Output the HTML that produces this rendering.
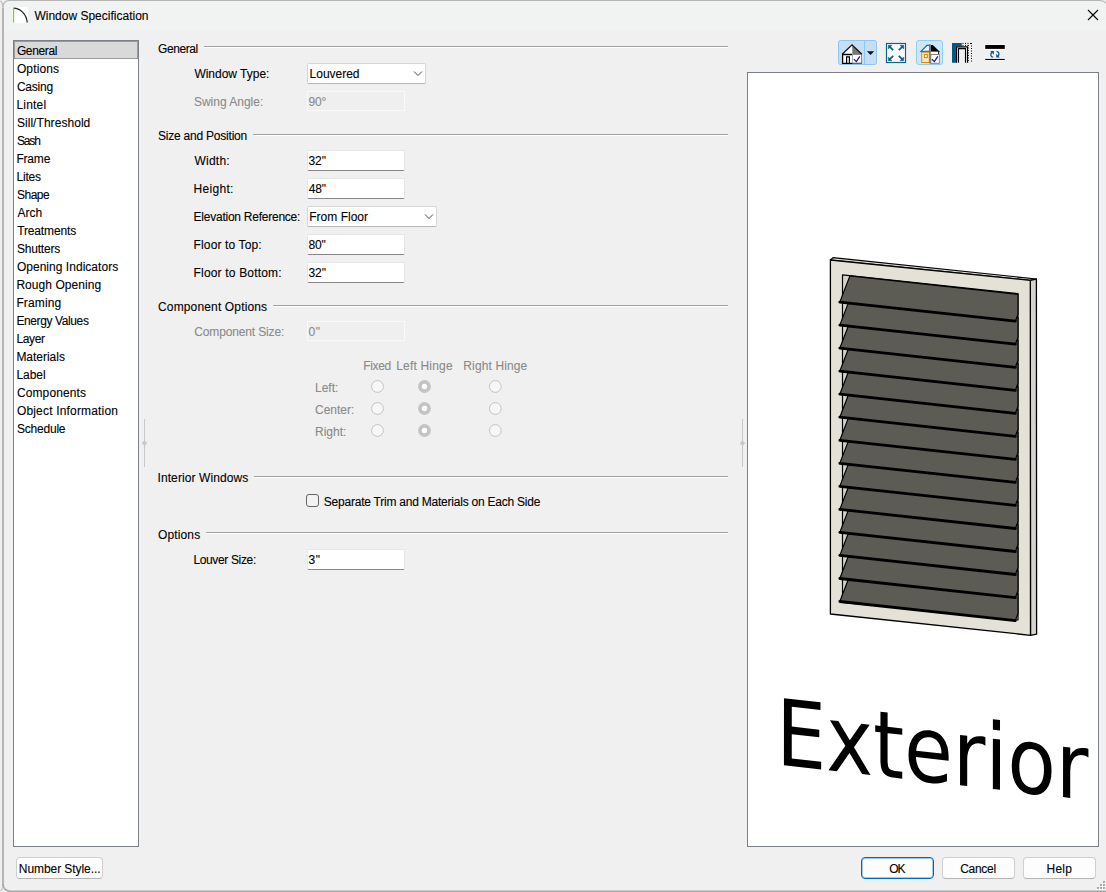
<!DOCTYPE html>
<html><head><meta charset="utf-8"><style>
html,body{margin:0;padding:0;}
body{width:1106px;height:892px;position:relative;overflow:hidden;background:#f0f0f0;font-family:'Liberation Sans',sans-serif;font-size:12px;}
.t{position:absolute;white-space:nowrap;line-height:14px;font-size:12px;-webkit-text-stroke:0.1px currentColor;}
</style></head><body>
<div style="position:absolute;left:4px;top:1px;width:1102px;height:890px;background:#f0f0f0;border-radius:7px 7px 0 7px;overflow:hidden"><div style="position:absolute;left:0;top:0;right:0;height:30px;background:#f1f3f3"></div></div><svg style="position:absolute;left:0;top:0" width="1106" height="892"><path d="M0.3 0.8 Q2.8 2.5 3 7" fill="none" stroke="#c4c4c4" stroke-width="1.2"/><path d="M0.3 891 Q2.8 889.5 3 885" fill="none" stroke="#c4c4c4" stroke-width="1.2"/><path d="M3 886 L3 7 Q3.2 1.2 9 0.5 L1099 0.5 Q1104.5 0.8 1106 3.5" fill="none" stroke="#b6b6b6" stroke-width="1.2"/><path d="M3 886 L3 8" fill="none" stroke="#b0b0b0" stroke-width="1.6"/><path d="M3 884 Q3.3 890.6 10 891.2 L1106 891.2" fill="none" stroke="#a8a8a8" stroke-width="1.6"/></svg><div style="position:absolute;left:1103px;top:881px;width:2px;height:2px;background:#a8a8a8;box-shadow:1px 1px 0 #fff;"></div><div style="position:absolute;left:1100px;top:884px;width:2px;height:2px;background:#a8a8a8;box-shadow:1px 1px 0 #fff;"></div><div style="position:absolute;left:1103px;top:884px;width:2px;height:2px;background:#a8a8a8;box-shadow:1px 1px 0 #fff;"></div><div style="position:absolute;left:1097px;top:887px;width:2px;height:2px;background:#a8a8a8;box-shadow:1px 1px 0 #fff;"></div><div style="position:absolute;left:1100px;top:887px;width:2px;height:2px;background:#a8a8a8;box-shadow:1px 1px 0 #fff;"></div><div style="position:absolute;left:1103px;top:887px;width:2px;height:2px;background:#a8a8a8;box-shadow:1px 1px 0 #fff;"></div><svg style="position:absolute;left:12px;top:7px" width="17" height="17" viewBox="0 0 17 17">
<rect x="1" y="0" width="15" height="16" fill="#fff"/>
<path d="M1.5 1.2 C8 1.2 14.5 7 15.2 15.5" stroke="#222" stroke-width="1.3" fill="none"/>
<rect x="1" y="1.5" width="1.2" height="14" fill="#8cc63f"/>
</svg><div class="t" style="left:34.40px;top:9px;color:#000;letter-spacing:0.003px;">Window Specification</div><svg style="position:absolute;left:1086px;top:8px" width="14" height="14" viewBox="0 0 14 14">
<path d="M2 2 L12 12 M12 2 L2 12" stroke="#000" stroke-width="1.1"/></svg><div style="position:absolute;left:13px;top:40px;width:126px;height:807px;background:#fff;border:1px solid #7a7f88;box-sizing:border-box;"></div><div style="position:absolute;left:14px;top:41px;width:124px;height:18px;background:#d9d9d9;border:1px solid #9a9a9a;box-sizing:border-box;"></div><div class="t" style="left:16.90px;top:44px;color:#000;letter-spacing:-0.367px;">General</div><div class="t" style="left:16.90px;top:62px;color:#000;letter-spacing:0.133px;">Options</div><div class="t" style="left:16.90px;top:80px;color:#000;letter-spacing:-0.210px;">Casing</div><div class="t" style="left:16.40px;top:98px;color:#000;letter-spacing:0.200px;">Lintel</div><div class="t" style="left:16.90px;top:116px;color:#000;letter-spacing:0.054px;">Sill/Threshold</div><div class="t" style="left:16.90px;top:134px;color:#000;letter-spacing:-1.117px;">Sash</div><div class="t" style="left:16.40px;top:152px;color:#000;letter-spacing:-0.188px;">Frame</div><div class="t" style="left:16.40px;top:170px;color:#000;letter-spacing:-0.175px;">Lites</div><div class="t" style="left:16.90px;top:188px;color:#000;letter-spacing:-0.463px;">Shape</div><div class="t" style="left:17.40px;top:206px;color:#000;letter-spacing:0.000px;">Arch</div><div class="t" style="left:17.15px;top:224px;color:#000;letter-spacing:-0.133px;">Treatments</div><div class="t" style="left:16.90px;top:242px;color:#000;letter-spacing:-0.193px;">Shutters</div><div class="t" style="left:16.90px;top:260px;color:#000;letter-spacing:0.032px;">Opening Indicators</div><div class="t" style="left:16.40px;top:278px;color:#000;letter-spacing:0.062px;">Rough Opening</div><div class="t" style="left:16.40px;top:296px;color:#000;letter-spacing:0.142px;">Framing</div><div class="t" style="left:16.40px;top:314px;color:#000;letter-spacing:-0.388px;">Energy Values</div><div class="t" style="left:16.40px;top:332px;color:#000;letter-spacing:-0.338px;">Layer</div><div class="t" style="left:16.40px;top:350px;color:#000;letter-spacing:-0.019px;">Materials</div><div class="t" style="left:16.40px;top:368px;color:#000;letter-spacing:-0.025px;">Label</div><div class="t" style="left:16.90px;top:386px;color:#000;letter-spacing:0.128px;">Components</div><div class="t" style="left:16.90px;top:404px;color:#000;letter-spacing:0.179px;">Object Information</div><div class="t" style="left:16.90px;top:422px;color:#000;letter-spacing:-0.200px;">Schedule</div><div style="position:absolute;left:144px;top:419px;width:1px;height:48px;background:#c8c8c8;"></div><svg style="position:absolute;left:140px;top:439px" width="9" height="9"><path d="M4.5 1.3 L7.2 4.2 L4.5 7.1 L1.8 4.2 Z" fill="#c8c8c8"/></svg><div style="position:absolute;left:742px;top:419px;width:1px;height:48px;background:#c8c8c8;"></div><svg style="position:absolute;left:738px;top:439px" width="9" height="9"><path d="M4.5 1.3 L7.2 4.2 L4.5 7.1 L1.8 4.2 Z" fill="#c8c8c8"/></svg><div class="t" style="left:158.00px;top:42px;color:#000;letter-spacing:-0.417px;">General</div><div style="position:absolute;left:204px;top:46px;width:524px;height:1px;background:#a0a0a0;"></div><div style="position:absolute;left:204px;top:47px;width:524px;height:1px;background:#fff;"></div><div class="t" style="left:158.00px;top:129px;color:#000;letter-spacing:-0.219px;">Size and Position</div><div style="position:absolute;left:253px;top:134px;width:475px;height:1px;background:#a0a0a0;"></div><div style="position:absolute;left:253px;top:135px;width:475px;height:1px;background:#fff;"></div><div class="t" style="left:158.00px;top:300px;color:#000;letter-spacing:0.147px;">Component Options</div><div style="position:absolute;left:273px;top:305px;width:455px;height:1px;background:#a0a0a0;"></div><div style="position:absolute;left:273px;top:306px;width:455px;height:1px;background:#fff;"></div><div class="t" style="left:157.50px;top:471px;color:#000;letter-spacing:0.093px;">Interior Windows</div><div style="position:absolute;left:254px;top:476px;width:474px;height:1px;background:#a0a0a0;"></div><div style="position:absolute;left:254px;top:477px;width:474px;height:1px;background:#fff;"></div><div class="t" style="left:158.00px;top:528px;color:#000;letter-spacing:0.133px;">Options</div><div style="position:absolute;left:206px;top:532px;width:522px;height:1px;background:#a0a0a0;"></div><div style="position:absolute;left:206px;top:533px;width:522px;height:1px;background:#fff;"></div><div class="t" style="left:194.40px;top:67px;color:#000;letter-spacing:-0.009px;">Window Type:</div><div class="t" style="left:193.90px;top:95px;color:#8a8a8a;letter-spacing:-0.005px;">Swing Angle:</div><div class="t" style="left:194.60px;top:154px;color:#000;letter-spacing:0.200px;">Width:</div><div class="t" style="left:193.60px;top:182px;color:#000;letter-spacing:0.300px;">Height:</div><div class="t" style="left:193.60px;top:210px;color:#000;letter-spacing:-0.245px;">Elevation Reference:</div><div class="t" style="left:193.60px;top:238px;color:#000;letter-spacing:0.125px;">Floor to Top:</div><div class="t" style="left:193.60px;top:266px;color:#000;letter-spacing:0.170px;">Floor to Bottom:</div><div class="t" style="left:194.30px;top:325px;color:#8a8a8a;letter-spacing:-0.150px;">Component Size:</div><div class="t" style="left:193.40px;top:553px;color:#000;letter-spacing:-0.350px;">Louver Size:</div><div style="position:absolute;left:307px;top:63px;width:119px;height:21px;background:#fff;border:1px solid #d6d6d6;border-bottom-color:#b8b8b8;border-radius:2px;box-sizing:border-box;"></div><div class="t" style="left:309.60px;top:67px;color:#000;letter-spacing:-0.021px;">Louvered</div><svg style="position:absolute;left:413px;top:70px" width="10" height="7" viewBox="0 0 10 7"><path d="M1 1.5 L5 5.5 L9 1.5" stroke="#444" stroke-width="1" fill="none"/></svg><div style="position:absolute;left:307px;top:91px;width:98px;height:20px;background:#efefef;border:1px solid #f9f9f9;box-sizing:border-box;"></div><div class="t" style="left:308.40px;top:95px;color:#8a8a8a;letter-spacing:-0.100px;">90°</div><div style="position:absolute;left:307px;top:150px;width:98px;height:21px;background:#fff;border:1px solid #e6e6e6;border-bottom:1px solid #878787;border-radius:2px;box-sizing:border-box;"></div><div class="t" style="left:308.40px;top:154px;color:#000;letter-spacing:-0.025px;">32"</div><div style="position:absolute;left:307px;top:178px;width:98px;height:21px;background:#fff;border:1px solid #e6e6e6;border-bottom:1px solid #878787;border-radius:2px;box-sizing:border-box;"></div><div class="t" style="left:308.65px;top:182px;color:#000;letter-spacing:-0.150px;">48"</div><div style="position:absolute;left:307px;top:206px;width:130px;height:21px;background:#fff;border:1px solid #d6d6d6;border-bottom-color:#b8b8b8;border-radius:2px;box-sizing:border-box;"></div><div class="t" style="left:309.20px;top:210px;color:#000;letter-spacing:0.022px;">From Floor</div><svg style="position:absolute;left:424px;top:213px" width="10" height="7" viewBox="0 0 10 7"><path d="M1 1.5 L5 5.5 L9 1.5" stroke="#444" stroke-width="1" fill="none"/></svg><div style="position:absolute;left:307px;top:234px;width:98px;height:21px;background:#fff;border:1px solid #e6e6e6;border-bottom:1px solid #878787;border-radius:2px;box-sizing:border-box;"></div><div class="t" style="left:308.40px;top:238px;color:#000;letter-spacing:-0.125px;">80"</div><div style="position:absolute;left:307px;top:262px;width:98px;height:21px;background:#fff;border:1px solid #e6e6e6;border-bottom:1px solid #878787;border-radius:2px;box-sizing:border-box;"></div><div class="t" style="left:308.40px;top:266px;color:#000;letter-spacing:-0.025px;">32"</div><div style="position:absolute;left:307px;top:321px;width:98px;height:20px;background:#efefef;border:1px solid #f9f9f9;box-sizing:border-box;"></div><div class="t" style="left:308.40px;top:325px;color:#8a8a8a;letter-spacing:0.600px;">0"</div><div style="position:absolute;left:307px;top:549px;width:98px;height:21px;background:#fff;border:1px solid #e6e6e6;border-bottom:1px solid #878787;border-radius:2px;box-sizing:border-box;"></div><div class="t" style="left:308.40px;top:553px;color:#000;letter-spacing:0.600px;">3"</div><div class="t" style="left:363.30px;top:359px;color:#8a8a8a;letter-spacing:-0.362px;">Fixed</div><div class="t" style="left:396.20px;top:359px;color:#8a8a8a;letter-spacing:0.194px;">Left Hinge</div><div class="t" style="left:463.30px;top:359px;color:#8a8a8a;letter-spacing:0.125px;">Right Hinge</div><div class="t" style="left:315.00px;top:381px;color:#8a8a8a;letter-spacing:0.000px;">Left:</div><div class="t" style="left:315.00px;top:403px;color:#8a8a8a;letter-spacing:0.000px;">Center:</div><div class="t" style="left:315.00px;top:425px;color:#8a8a8a;letter-spacing:0.000px;">Right:</div><svg style="position:absolute;left:0;top:0" width="1106" height="892"><circle cx="377.5" cy="386.5" r="5.9" fill="#f7f7f7" stroke="#c4c4c4" stroke-width="1"/><circle cx="424.5" cy="386.5" r="6.4" fill="#c4c4c4"/><circle cx="424.5" cy="386.5" r="2.7" fill="#fff"/><circle cx="495.3" cy="386.5" r="5.9" fill="#f7f7f7" stroke="#c4c4c4" stroke-width="1"/><circle cx="377.5" cy="408.5" r="5.9" fill="#f7f7f7" stroke="#c4c4c4" stroke-width="1"/><circle cx="424.5" cy="408.5" r="6.4" fill="#c4c4c4"/><circle cx="424.5" cy="408.5" r="2.7" fill="#fff"/><circle cx="495.3" cy="408.5" r="5.9" fill="#f7f7f7" stroke="#c4c4c4" stroke-width="1"/><circle cx="377.5" cy="430.5" r="5.9" fill="#f7f7f7" stroke="#c4c4c4" stroke-width="1"/><circle cx="424.5" cy="430.5" r="6.4" fill="#c4c4c4"/><circle cx="424.5" cy="430.5" r="2.7" fill="#fff"/><circle cx="495.3" cy="430.5" r="5.9" fill="#f7f7f7" stroke="#c4c4c4" stroke-width="1"/></svg><div style="position:absolute;left:306px;top:494px;width:13px;height:13px;background:#f2f2f2;border:1px solid #646464;border-radius:3px;box-sizing:border-box;"></div><div class="t" style="left:323.80px;top:495px;color:#000;letter-spacing:-0.226px;">Separate Trim and Materials on Each Side</div><div style="position:absolute;left:16px;top:857px;width:87px;height:22px;background:#fdfdfd;border:1px solid #d0d0d0;border-bottom-color:#b5b5b5;border-radius:4px;box-sizing:border-box;"></div><div class="t" style="left:18.85px;top:862px;color:#000;letter-spacing:-0.075px;">Number Style...</div><div style="position:absolute;left:861px;top:857px;width:73px;height:22px;background:#fdfdfd;border:1px solid #0067c0;box-shadow:inset 0 0 0 1px rgba(0,103,192,0.35);border-radius:4px;box-sizing:border-box;"></div><div class="t" style="left:889.35px;top:862px;color:#000;letter-spacing:-1.200px;">OK</div><div style="position:absolute;left:942px;top:857px;width:73px;height:22px;background:#fdfdfd;border:1px solid #d0d0d0;border-bottom-color:#b5b5b5;border-radius:4px;box-sizing:border-box;"></div><div class="t" style="left:960.15px;top:862px;color:#000;letter-spacing:-0.260px;">Cancel</div><div style="position:absolute;left:1023px;top:857px;width:73px;height:22px;background:#fdfdfd;border:1px solid #d0d0d0;border-bottom-color:#b5b5b5;border-radius:4px;box-sizing:border-box;"></div><div class="t" style="left:1046.50px;top:862px;color:#000;letter-spacing:0.217px;">Help</div><div style="position:absolute;left:747px;top:72px;width:352px;height:775px;background:#fff;border:1px solid #7a7f88;box-sizing:border-box;"></div><svg style="position:absolute;left:0;top:0" width="1106" height="892"><polygon points="830.4,260.0 833.0,257.6 1036.4,279.0 1030.3,280.3" fill="#dcdad0" stroke="#000" stroke-width="1.1" stroke-linejoin="round" /><polygon points="1030.3,280.3 1036.4,279.0 1036.6,634.2 1030.5,635.3" fill="#d6d4ca" stroke="#000" stroke-width="1.3" stroke-linejoin="round" /><polygon points="830.4,260.0 1030.3,280.3 1030.5,635.3 830.4,614.0" fill="#e4e2d7" stroke="#000" stroke-width="1.3" stroke-linejoin="round" /><polygon points="842.5,274.9 1018.0,293.6 1018.0,620.0 842.5,602.5" fill="#d4d2c8" stroke="#000" stroke-width="1.2" stroke-linejoin="round" /><polygon points="849.9,575.3 1018.0,593.7 1018.0,613.8 1015.3,620.6 839.8,601.5" fill="#5c5c54" stroke="#000" stroke-width="1.2" stroke-linejoin="round" /><line x1="839.8" y1="601.5" x2="1015.3" y2="620.6" stroke="#000" stroke-width="2.8" stroke-linecap="round"/><polygon points="849.9,552.3 1018.0,570.7 1018.0,590.8 1015.3,597.6 839.8,578.5" fill="#5c5c54" stroke="#000" stroke-width="1.2" stroke-linejoin="round" /><line x1="839.8" y1="578.5" x2="1015.3" y2="597.6" stroke="#000" stroke-width="2.8" stroke-linecap="round"/><polygon points="849.9,529.2 1018.0,547.6 1018.0,567.7 1015.3,574.5 839.8,555.4" fill="#5c5c54" stroke="#000" stroke-width="1.2" stroke-linejoin="round" /><line x1="839.8" y1="555.4" x2="1015.3" y2="574.5" stroke="#000" stroke-width="2.8" stroke-linecap="round"/><polygon points="849.9,506.2 1018.0,524.6 1018.0,544.7 1015.3,551.5 839.8,532.4" fill="#5c5c54" stroke="#000" stroke-width="1.2" stroke-linejoin="round" /><line x1="839.8" y1="532.4" x2="1015.3" y2="551.5" stroke="#000" stroke-width="2.8" stroke-linecap="round"/><polygon points="849.9,483.2 1018.0,501.6 1018.0,521.7 1015.3,528.5 839.8,509.4" fill="#5c5c54" stroke="#000" stroke-width="1.2" stroke-linejoin="round" /><line x1="839.8" y1="509.4" x2="1015.3" y2="528.5" stroke="#000" stroke-width="2.8" stroke-linecap="round"/><polygon points="849.9,460.1 1018.0,478.5 1018.0,498.6 1015.3,505.4 839.8,486.3" fill="#5c5c54" stroke="#000" stroke-width="1.2" stroke-linejoin="round" /><line x1="839.8" y1="486.3" x2="1015.3" y2="505.4" stroke="#000" stroke-width="2.8" stroke-linecap="round"/><polygon points="849.9,437.1 1018.0,455.5 1018.0,475.6 1015.3,482.4 839.8,463.3" fill="#5c5c54" stroke="#000" stroke-width="1.2" stroke-linejoin="round" /><line x1="839.8" y1="463.3" x2="1015.3" y2="482.4" stroke="#000" stroke-width="2.8" stroke-linecap="round"/><polygon points="849.9,414.1 1018.0,432.5 1018.0,452.6 1015.3,459.4 839.8,440.3" fill="#5c5c54" stroke="#000" stroke-width="1.2" stroke-linejoin="round" /><line x1="839.8" y1="440.3" x2="1015.3" y2="459.4" stroke="#000" stroke-width="2.8" stroke-linecap="round"/><polygon points="849.9,391.0 1018.0,409.4 1018.0,429.5 1015.3,436.3 839.8,417.2" fill="#5c5c54" stroke="#000" stroke-width="1.2" stroke-linejoin="round" /><line x1="839.8" y1="417.2" x2="1015.3" y2="436.3" stroke="#000" stroke-width="2.8" stroke-linecap="round"/><polygon points="849.9,368.0 1018.0,386.4 1018.0,406.5 1015.3,413.3 839.8,394.2" fill="#5c5c54" stroke="#000" stroke-width="1.2" stroke-linejoin="round" /><line x1="839.8" y1="394.2" x2="1015.3" y2="413.3" stroke="#000" stroke-width="2.8" stroke-linecap="round"/><polygon points="849.9,345.0 1018.0,363.4 1018.0,383.5 1015.3,390.3 839.8,371.2" fill="#5c5c54" stroke="#000" stroke-width="1.2" stroke-linejoin="round" /><line x1="839.8" y1="371.2" x2="1015.3" y2="390.3" stroke="#000" stroke-width="2.8" stroke-linecap="round"/><polygon points="849.9,322.0 1018.0,340.4 1018.0,360.5 1015.3,367.3 839.8,348.2" fill="#5c5c54" stroke="#000" stroke-width="1.2" stroke-linejoin="round" /><line x1="839.8" y1="348.2" x2="1015.3" y2="367.3" stroke="#000" stroke-width="2.8" stroke-linecap="round"/><polygon points="849.9,298.9 1018.0,317.3 1018.0,337.4 1015.3,344.2 839.8,325.1" fill="#5c5c54" stroke="#000" stroke-width="1.2" stroke-linejoin="round" /><line x1="839.8" y1="325.1" x2="1015.3" y2="344.2" stroke="#000" stroke-width="2.8" stroke-linecap="round"/><polygon points="849.9,275.9 1018.0,294.3 1018.0,314.4 1015.3,321.2 839.8,302.1" fill="#5c5c54" stroke="#000" stroke-width="1.2" stroke-linejoin="round" /><line x1="839.8" y1="302.1" x2="1015.3" y2="321.2" stroke="#000" stroke-width="2.8" stroke-linecap="round"/></svg><svg style="position:absolute;left:0;top:0" width="1106" height="892"><g transform="matrix(0.038668,0.0044208,0.0000251,-0.044874,776.17,764.26)" fill="#000"><path transform="translate(0 0)" d="M201 1493H1145V1323H403V881H1114V711H403V170H1163V0H201Z"/><path transform="translate(1294 0)" d="M1124 1120 719 575 1145 0H928L602 440L276 0H59L494 586L96 1120H313L610 721L907 1120Z"/><path transform="translate(2506 0)" d="M375 1438V1120H754V977H375V369Q375 232 412.5 193Q450 154 565 154H754V0H565Q352 0 271 79.5Q190 159 190 369V977H55V1120H190V1438Z"/><path transform="translate(3309 0)" d="M1151 606V516H305Q317 326 419.5 226.5Q522 127 705 127Q811 127 910.5 153Q1010 179 1108 231V57Q1009 15 905 -7Q801 -29 694 -29Q426 -29 269.5 127Q113 283 113 549Q113 824 261.5 985.5Q410 1147 662 1147Q888 1147 1019.5 1001.5Q1151 856 1151 606ZM967 660Q965 811 882.5 901Q800 991 664 991Q510 991 417.5 904Q325 817 311 659Z"/><path transform="translate(4569 0)" d="M842 948Q811 966 774.5 974.5Q738 983 694 983Q538 983 454.5 881.5Q371 780 371 590V0H186V1120H371V946Q429 1048 522 1097.5Q615 1147 748 1147Q767 1147 790 1144.5Q813 1142 841 1137Z"/><path transform="translate(5411 0)" d="M193 1120H377V0H193ZM193 1556H377V1323H193Z"/><path transform="translate(5980 0)" d="M627 991Q479 991 393 875.5Q307 760 307 559Q307 358 392.5 242.5Q478 127 627 127Q774 127 860 243Q946 359 946 559Q946 758 860 874.5Q774 991 627 991ZM627 1147Q867 1147 1004 991Q1141 835 1141 559Q1141 284 1004 127.5Q867 -29 627 -29Q386 -29 249.5 127.5Q113 284 113 559Q113 835 249.5 991Q386 1147 627 1147Z"/><path transform="translate(7233 0)" d="M842 948Q811 966 774.5 974.5Q738 983 694 983Q538 983 454.5 881.5Q371 780 371 590V0H186V1120H371V946Q429 1048 522 1097.5Q615 1147 748 1147Q767 1147 790 1144.5Q813 1142 841 1137Z"/></g></svg><svg style="position:absolute;left:0;top:0" width="1106" height="892"><rect x="838.5" y="40.5" width="38" height="24" rx="2" fill="#c5def4" stroke="#8fc5f0" stroke-width="1"/><line x1="864.5" y1="41" x2="864.5" y2="64" stroke="#8fc5f0" stroke-width="1"/><path d="M852 44.6 L842.5 54 L861.5 54 Z" fill="#fff"/><path d="M852 44.6 L861.5 54 L852.5 54 Z" fill="#777"/><rect x="842.5" y="54" width="19" height="9" fill="#fff"/><path d="M852.5 54.5 L861.5 54.5 L861.5 63.2" fill="none" stroke="#8a8a8a" stroke-width="1"/><line x1="852.5" y1="63.3" x2="862" y2="63.3" stroke="#555" stroke-width="1.2"/><path d="M852.5 63.3 L842.6 63.3 L842.6 54 M842.4 54.5 L852.5 54.5" fill="none" stroke="#000" stroke-width="1.3"/><path d="M842.2 54.3 L852 44.8 L861.8 54.3" fill="none" stroke="#111" stroke-width="1.3" stroke-linejoin="miter"/><line x1="852.5" y1="46" x2="852.5" y2="63" stroke="#9a9a9a" stroke-width="0.8"/><path d="M846.6 63 L846.6 56.8 L849.4 56.8 L849.4 63" fill="none" stroke="#000" stroke-width="1.2"/><path d="M853.9 59.2 L856.4 61.6 L859.8 56.3" fill="none" stroke="#1c1c9e" stroke-width="1.3"/><path d="M866.9 51.2 L874.2 51.2 L870.55 54.9 Z" fill="#111"/><rect x="886.5" y="43.5" width="19" height="19" fill="#fff" stroke="#0f618c" stroke-width="1.2"/><path d="M888.3 45.3 L892.0 45.3 L888.3 49.0 Z" fill="#0b5a86" stroke="#0b5a86" stroke-width="0.5" stroke-linejoin="round"/><line x1="889.8" y1="46.8" x2="893.1999999999999" y2="50.199999999999996" stroke="#0b5a86" stroke-width="1.7"/><path d="M903.7 45.3 L900.0 45.3 L903.7 49.0 Z" fill="#0b5a86" stroke="#0b5a86" stroke-width="0.5" stroke-linejoin="round"/><line x1="902.2" y1="46.8" x2="898.8000000000001" y2="50.199999999999996" stroke="#0b5a86" stroke-width="1.7"/><path d="M888.3 60.7 L892.0 60.7 L888.3 57.0 Z" fill="#0b5a86" stroke="#0b5a86" stroke-width="0.5" stroke-linejoin="round"/><line x1="889.8" y1="59.2" x2="893.1999999999999" y2="55.800000000000004" stroke="#0b5a86" stroke-width="1.7"/><path d="M903.7 60.7 L900.0 60.7 L903.7 57.0 Z" fill="#0b5a86" stroke="#0b5a86" stroke-width="0.5" stroke-linejoin="round"/><line x1="902.2" y1="59.2" x2="898.8000000000001" y2="55.800000000000004" stroke="#0b5a86" stroke-width="1.7"/><rect x="916.5" y="40.5" width="26" height="24" rx="2.5" fill="#cce8fd" stroke="#92cbf5" stroke-width="1"/><path d="M921.00 51.40 L927.00 45.40 L929.50 45.40 L929.50 51.40 Z" fill="#fff" stroke="#136b8e" stroke-width="1.15"/><rect x="921.7" y="52.2" width="7.6" height="10.3" fill="#f8e9b4" stroke="#d48a12" stroke-width="1"/><rect x="924.4" y="54.5" width="3" height="3" fill="#fff" stroke="#d48a12" stroke-width="1"/><path d="M930.60 44.90 L932.80 44.90 L940.00 51.90 L930.60 51.90 Z" fill="#000"/><rect x="930.6" y="51.6" width="8" height="2.8" fill="#fff"/><line x1="938.6" y1="51.4" x2="938.6" y2="54.4" stroke="#000" stroke-width="0.9"/><rect x="930.8" y="54.5" width="8.6" height="8.8" fill="#fff" stroke="#858585" stroke-width="1"/><line x1="930" y1="44.2" x2="930" y2="63.6" stroke="#7a7a7a" stroke-width="1.6"/><path d="M931.90 59.20 L934.40 61.60 L937.80 56.30" fill="none" stroke="#1c1c9e" stroke-width="1.3"/><path d="M952.00 43.00 L961.80 43.00 L961.80 46.20 L956.20 46.20 L956.20 62.80 L952.00 62.80 Z" fill="#00598a"/><path d="M956.60 62.80 L956.60 46.90 L967.50 46.90 L967.50 62.80" fill="none" stroke="#000" stroke-width="1.1"/><path d="M958.50 62.80 L958.50 48.60 L965.50 48.60 L965.50 62.80" fill="none" stroke="#000" stroke-width="1.1"/><line x1="968.3" y1="45" x2="968.3" y2="62.8" stroke="#000" stroke-width="1" stroke-dasharray="1 1.5"/><line x1="971.5" y1="43" x2="971.5" y2="62.8" stroke="#000" stroke-width="1" stroke-dasharray="1 1.5"/><line x1="962.5" y1="43.4" x2="971.5" y2="43.4" stroke="#000" stroke-width="1" stroke-dasharray="1 1.5"/><line x1="962.5" y1="45.4" x2="968.5" y2="45.4" stroke="#000" stroke-width="1" stroke-dasharray="1 1.5"/><rect x="984.5" y="44.3" width="20.6" height="5.4" fill="#fff"/><rect x="985.2" y="45" width="19.6" height="3.9" fill="#000"/><rect x="984.5" y="58.2" width="20.6" height="2.5" fill="#fff"/><rect x="985.2" y="58.9" width="19.6" height="1.1" fill="#000"/><path d="M993.20 57.20 C990.50 57.00 990.20 54.00 991.80 52.30" fill="none" stroke="#0b5a86" stroke-width="1.3"/><path d="M990.20 51.10 L993.90 51.10 L993.90 54.80 Z" fill="#0b5a86"/><path d="M996.50 51.30 C999.30 51.50 999.60 54.50 998.00 56.20" fill="none" stroke="#0b5a86" stroke-width="1.3"/><path d="M999.90 57.50 L996.20 57.50 L996.20 53.80 Z" fill="#0b5a86"/></svg>
</body></html>
